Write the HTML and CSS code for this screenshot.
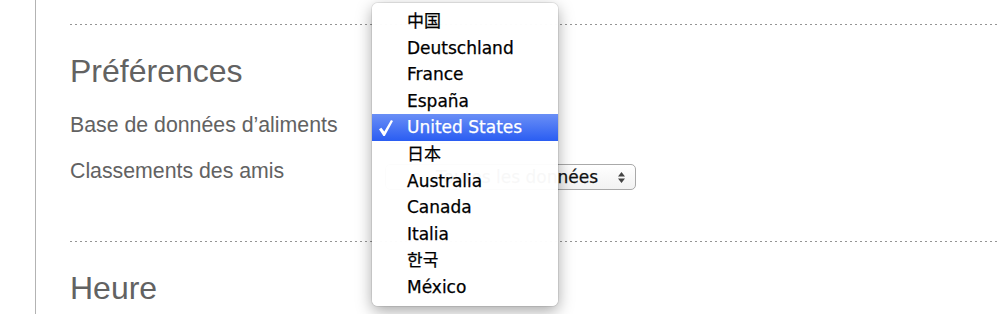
FILE: index.html
```html
<!DOCTYPE html>
<html lang="fr">
<head>
  <meta charset="UTF-8" />
  <title>Préférences</title>
  <link rel="stylesheet" href="styles.css">
</head>
<body>

  <div class="page">
    <div class="divider"></div>

    <section class="section">
      <h2>Préférences</h2>
      <div class="row">
        <span class="label">Base de données d’aliments</span>
        <div class="select narrow">
          <span>United States</span>
          <svg class="arrows" width="7" height="11" viewBox="0 0 7 11"><path d="M0 4.5 L3.5 0 L7 4.5 Z M0 6.5 L3.5 11 L7 6.5 Z" /></svg>
        </div>
      </div>
      <div class="row">
        <span class="label">Classements des amis</span>
        <div class="select wide">
          <span>Toutes les données</span>
          <svg class="arrows" width="7" height="11" viewBox="0 0 7 11"><path d="M0 4.5 L3.5 0 L7 4.5 Z M0 6.5 L3.5 11 L7 6.5 Z" /></svg>
        </div>
      </div>
    </section>

    <div class="divider"></div>

    <section class="section last">
      <h2>Heure</h2>
    </section>
  </div>

  <ul class="menu">
    <li>中国</li>
    <li>Deutschland</li>
    <li>France</li>
    <li>España</li>
    <li class="selected">
      <svg class="check" width="14" height="16" viewBox="0 0 14 16"><path d="M0 9.2 L2.4 7.8 L5.3 11.6 L12 0 L14 1.1 L5.8 16 L4.4 16 Z" /></svg>
      United States
    </li>
    <li>日本</li>
    <li>Australia</li>
    <li>Canada</li>
    <li>Italia</li>
    <li>한국</li>
    <li>México</li>
  </ul>

</body>
</html>
```

FILE: styles.css
```css
body {
  margin: 0;
  background: #fff;
  font-family: 'Liberation Sans', Arial, Helvetica, sans-serif;
  color: #626262;
  height: 314px;
  overflow: hidden;
}

.page {
  margin-left: 35px;
  border-left: 1px solid #b3b3b3;
  padding-top: 24px;
  padding-left: 34px;
  height: 314px;
  box-sizing: border-box;
  overflow: hidden;
}

.divider {
  height: 1px;
  background-image: repeating-linear-gradient(to right, #959595 0 2px, transparent 2px 5px);
}

.section {
  padding-bottom: 47px;
}

.section.last {
  padding-bottom: 0;
}

h2 {
  margin: 28px 0 12px;
  font-size: 32px;
  font-weight: normal;
  line-height: 37px;
  color: #626262;
}

.row {
  display: flex;
  align-items: center;
  height: 46px;
}

.label {
  width: 315px;
  font-size: 21.3px;
}

.select {
  display: flex;
  align-items: center;
  justify-content: flex-end;
  gap: 20px;
  height: 26px;
  margin-top: 12px;
  padding-right: 10px;
  box-sizing: border-box;
  border: 1px solid #a9a9a9;
  border-radius: 5px;
  background: linear-gradient(#ffffff, #f2f2f2);
  font-family: 'DejaVu Sans', 'Noto Sans', sans-serif;
  font-size: 17px;
  color: #111;
  -webkit-text-stroke: 0.25px #111;
}

.select.narrow {
  width: 170px;
}

.select.wide {
  width: 251px;
}

.arrows {
  fill: #444;
}

.menu {
  position: absolute;
  left: 372px;
  top: 3px;
  width: 186px;
  margin: 0;
  padding: 5px 0 5px;
  box-sizing: border-box;
  list-style: none;
  background: rgba(255, 255, 255, 0.97);
  border-radius: 6px;
  box-shadow: 0 5px 16px rgba(0, 0, 0, 0.35), 0 0 0 1px rgba(0, 0, 0, 0.08);
  font-family: 'DejaVu Sans', 'Noto Sans CJK SC', 'Noto Sans CJK KR', sans-serif;
  font-size: 17px;
  color: #000;
  -webkit-text-stroke: 0.25px #000;
}

.menu li {
  position: relative;
  height: 26.6px;
  line-height: 26.6px;
  padding-left: 35px;
}

.menu li.selected {
  background: linear-gradient(#6a8ff6, #2a5df2);
  color: #fff;
  -webkit-text-stroke: 0.25px #fff;
}

.check {
  position: absolute;
  left: 7px;
  top: 6px;
  fill: #fff;
}
```
